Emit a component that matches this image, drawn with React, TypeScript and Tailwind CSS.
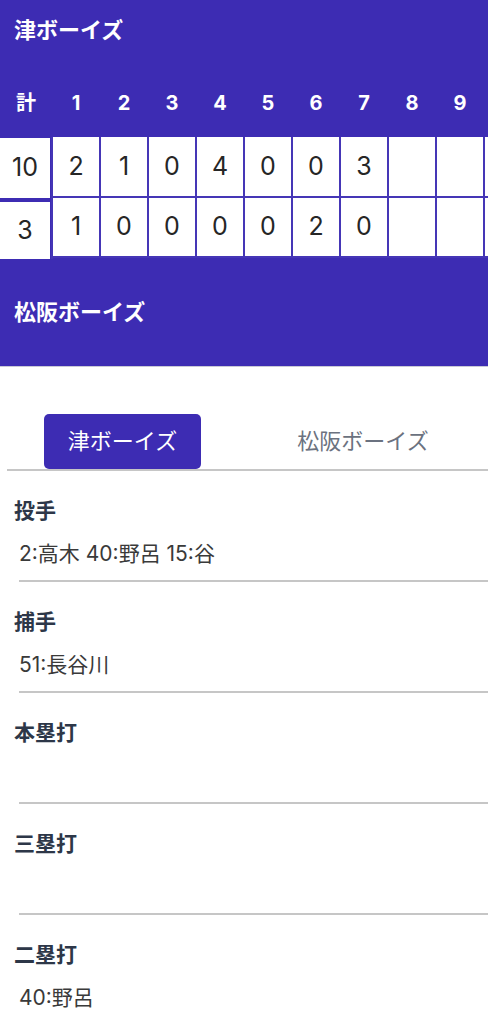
import React from "react";

const PURPLE = "bg-[#3d2cb3]";

const innings = ["1", "2", "3", "4", "5", "6", "7", "8", "9"];

type Team = {
  name: string;
  total: string;
  scores: string[];
};

const home: Team = { name: "津ボーイズ", total: "10", scores: ["2", "1", "0", "4", "0", "0", "3", "", "", ""] };
const away: Team = { name: "松阪ボーイズ", total: "3", scores: ["1", "0", "0", "0", "0", "2", "0", "", "", ""] };

const sections = [
  { label: "投手", value: "2:高木 40:野呂 15:谷" },
  { label: "捕手", value: "51:長谷川" },
  { label: "本塁打", value: "" },
  { label: "三塁打", value: "" },
  { label: "二塁打", value: "40:野呂" },
];

function ScoreRow({ team, first }: { team: Team; first: boolean }) {
  return (
    <div className={first ? "flex h-[61px]" : "flex h-[60px]"}>
      {team.scores.map((s, i) => (
        <div
          key={i}
          className="w-[48px] shrink-0 flex items-center justify-center bg-white border-r-2 border-b-2 border-[#4536b6] text-[25px] text-[#262626] font-normal"
        >
          {s}
        </div>
      ))}
    </div>
  );
}

export default function App() {
  return (
    <div
      className="w-[488px] min-h-[1024px] bg-white overflow-hidden"
      style={{ fontFamily: '"Inter", "Noto Sans CJK JP", sans-serif' }}
    >
      {/* scoreboard */}
      <div className={`${PURPLE} h-[367px] border-b border-[#c9c9d6] text-white`}>
        <div className="h-[60px] flex items-center pl-[14px] text-[22px] font-bold">{home.name}</div>

        <div className="h-[77px] pt-[8px] flex items-center">
          <div className="w-[52px] shrink-0 text-center text-[20px] font-bold">計</div>
          {innings.map((n) => (
            <div key={n} className="w-[48px] shrink-0 text-center text-[20px] font-bold">
              {n}
            </div>
          ))}
        </div>

        <div className="flex">
          <div className="w-[50px] shrink-0 mr-px flex flex-col">
            <div className="h-[60px] mt-[1px] bg-white flex items-center justify-center text-[25px] text-[#262626]">
              {home.total}
            </div>
            <div className="h-[57px] mt-[4px] bg-white flex items-center justify-center text-[25px] text-[#262626]">
              {away.total}
            </div>
          </div>
          <div className="flex flex-col border-l-2 border-[#4536b6]">
            <ScoreRow team={home} first />
            <ScoreRow team={away} first={false} />
          </div>
        </div>

        <div className="h-[106px] flex items-center pl-[14px] text-[22px] font-bold">{away.name}</div>
      </div>

      {/* tabs */}
      <div className="mt-[47px] ml-[7px] flex border-b-2 border-[#c6c6c6]">
        <div className="w-[231px] flex justify-center">
          <button className={`${PURPLE} w-[157px] h-[55px] rounded-[5px] text-white text-[22px]`}>
            {home.name}
          </button>
        </div>
        <div className="flex-1 flex items-center justify-center text-[22px] text-[#6b7280]">
          {away.name}
        </div>
      </div>

      {/* player stats */}
      <div>
        {sections.map((s) => (
          <div key={s.label} className="pl-[14px] pt-[25px]">
            <div className="h-[30px] leading-[30px] text-[21px] font-bold text-[#2d3748]">{s.label}</div>
            <div className="ml-[5px] mt-[13px] h-[43px] border-b-2 border-[#c6c6c6] text-[21px] leading-[30px] text-[#3a3a3a]">
              {s.value}
            </div>
          </div>
        ))}
      </div>
    </div>
  );
}
